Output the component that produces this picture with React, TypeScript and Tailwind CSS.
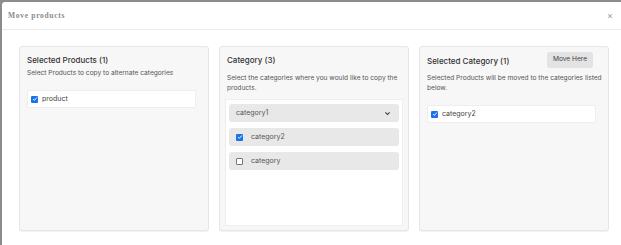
import React from "react";

function Check({ checked }: { checked?: boolean }) {
  return checked ? (
    <span className="flex h-[7px] w-[7px] items-center justify-center rounded-[1px] bg-[#1a73e8]">
      <svg viewBox="0 0 8 8" className="h-[6px] w-[6px]">
        <path d="M1.5 4.2 L3.2 5.8 L6.5 2" fill="none" stroke="white" strokeWidth="1.3" />
      </svg>
    </span>
  ) : (
    <span className="h-[7px] w-[7px] rounded-[1px] border border-[#767676] bg-white" />
  );
}

const panel = "flex h-[185px] w-[190px] shrink-0 flex-col rounded-[3px] border border-[#e6e6e6] bg-[#f7f7f7] shadow-[0_1px_1px_rgba(0,0,0,0.06)]";

export default function App() {
  return (
    <div
      className="h-[245px] w-[621px] overflow-hidden bg-[#8c8c8c] pl-[2px] pt-[2px]"
      style={{ fontFamily: "Inter, 'Noto Sans', sans-serif" }}
    >
      <div className="h-full w-full rounded-tl-[3px] bg-white">
        <header className="flex h-[28px] items-center justify-between border-b border-[#ececec] pl-[6px] pr-[8px]">
          <h1
            className="text-[7.5px] font-bold tracking-[0.7px] text-[#8a8a8a]"
            style={{ fontFamily: "'Liberation Serif', 'DejaVu Serif', serif" }}
          >
            Move products
          </h1>
          <span className="text-[9px] leading-none text-[#999]">×</span>
        </header>

        <section className="flex gap-[10px] pl-[17px] pt-[16px]">
          <div className={panel + " px-[7px] pt-[7px]"}>
            <h2 className="text-[8px] font-medium leading-[12px] text-[#333]">Selected Products (1)</h2>
            <p className="mt-[2px] text-[6.6px] leading-[10px] text-[#555]">
              Select Products to copy to alternate categories
            </p>
            <div className="mt-[12px] flex h-[18px] w-[169px] items-center gap-[4px] rounded-[2px] border border-[#eeeeee] bg-white pl-[3px]">
              <Check checked />
              <span className="text-[7px] text-[#444]">product</span>
            </div>
          </div>

          <div className={panel + " px-[5px] pt-[7px]"}>
            <h2 className="pl-[2px] text-[8px] font-medium leading-[12px] text-[#333]">Category (3)</h2>
            <p className="mt-[7px] pl-[2px] text-[6.6px] leading-[10px] text-[#555]">
              Select the categories where you would like to copy the products.
            </p>
            <div className="mt-[6px] flex flex-1 flex-col gap-[6px] border border-[#eeeeee] bg-white px-[3px] pt-[4px]">
              <div className="flex h-[18px] items-center justify-between rounded-[3px] bg-[#e8e8e8] pl-[7px] pr-[8px]">
                <span className="text-[7px] text-[#555]">category1</span>
                <svg viewBox="0 0 10 10" className="h-[7px] w-[7px]">
                  <path d="M2 3.5 L5 6.5 L8 3.5" fill="none" stroke="#333" strokeWidth="1.5" />
                </svg>
              </div>
              <div className="flex h-[18px] items-center gap-[8px] rounded-[3px] bg-[#e8e8e8] pl-[7px]">
                <Check checked />
                <span className="text-[7px] text-[#555]">category2</span>
              </div>
              <div className="flex h-[18px] items-center gap-[8px] rounded-[3px] bg-[#e8e8e8] pl-[7px]">
                <Check />
                <span className="text-[7px] text-[#555]">category</span>
              </div>
            </div>
            <div className="h-[4px]" />
          </div>

          <div className={panel + " pl-[7px] pr-[3px] pt-[5px]"}>
            <div className="flex items-center justify-between pr-[12px]">
              <h2 className="mt-[2px] text-[8px] font-medium leading-[12px] text-[#333]">Selected Category (1)</h2>
              <button className="h-[16px] w-[46px] rounded-[3px] bg-[#e3e3e3] text-[6.6px] text-[#444]">
                Move Here
              </button>
            </div>
            <p className="mt-[5px] text-[6.6px] leading-[10px] text-[#555]">
              Selected Products will be moved to the categories listed below.
            </p>
            <div className="mt-[12px] flex h-[18px] w-[169px] items-center gap-[4px] rounded-[2px] border border-[#eeeeee] bg-white pl-[3px]">
              <Check checked />
              <span className="text-[7px] text-[#444]">category2</span>
            </div>
          </div>
        </section>
      </div>
    </div>
  );
}
